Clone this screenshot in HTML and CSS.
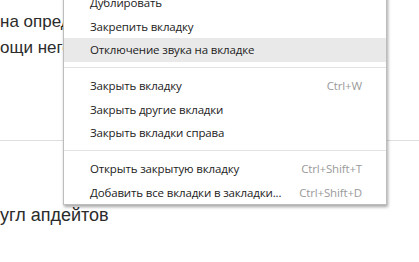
FILE: index.html
```html
<!DOCTYPE html>
<html lang="ru">
<head>
<meta charset="utf-8">
<link rel="stylesheet" href="styles.css">
</head>
<body>
<div class="page">
  <div class="para">
    <div class="line">на определённый запрос</div>
    <div class="line">ощи него можно найти</div>
  </div>
  <div class="rule"></div>
  <div class="heading">угл апдейтов</div>
</div>
<div class="menu">
  <div class="item"><span class="label">Дублировать</span></div>
  <div class="item"><span class="label">Закрепить вкладку</span></div>
  <div class="item hover"><span class="label">Отключение звука на вкладке</span></div>
  <div class="sep"></div>
  <div class="item"><span class="label">Закрыть вкладку</span><span class="key">Ctrl+W</span></div>
  <div class="item"><span class="label">Закрыть другие вкладки</span></div>
  <div class="item"><span class="label">Закрыть вкладки справа</span></div>
  <div class="sep"></div>
  <div class="item"><span class="label">Открыть закрытую вкладку</span><span class="key">Ctrl+Shift+T</span></div>
  <div class="item"><span class="label">Добавить все вкладки в закладки...</span><span class="key">Ctrl+Shift+D</span></div>
</div>
</body>
</html>
```
FILE: styles.css
```css
html, body {
  margin: 0;
  padding: 0;
  background: #ffffff;
}
body {
  width: 419px;
  height: 262px;
  overflow: hidden;
  position: relative;
}
.page {
  font-family: "Liberation Sans", Arial, sans-serif;
  color: #2b2b2b;
}
.para {
  padding-top: 9px;
  font-size: 17px;
  line-height: 26px;
  white-space: nowrap;
}
.rule {
  margin-top: 79px;
  height: 1px;
  background: #dedede;
}
.heading {
  margin-top: 62px;
  font-size: 18px;
  line-height: 24px;
  white-space: nowrap;
}
.menu {
  position: absolute;
  left: 63px;
  top: -13px;
  width: 322px;
  background: #ffffff;
  border: 1px solid #bdbdbd;
  box-shadow: 1px 2px 3px rgba(0, 0, 0, 0.35);
  padding: 3px 0 0 0;
  font-family: "Open Sans", "Noto Sans", sans-serif;
  font-size: 11.5px;
  letter-spacing: -0.15px;
  color: #222222;
}
.item {
  height: 23.5px;
  display: flex;
  align-items: center;
  justify-content: space-between;
  padding: 0 24px 0 26px;
  white-space: nowrap;
}
.item.hover {
  background: #e9e9e9;
}
.key {
  color: #9a9a9a;
}
.sep {
  height: 12.5px;
  display: flex;
  align-items: center;
}
.sep::before {
  content: "";
  display: block;
  width: 100%;
  height: 1px;
  background: #e3e3e3;
}
```
